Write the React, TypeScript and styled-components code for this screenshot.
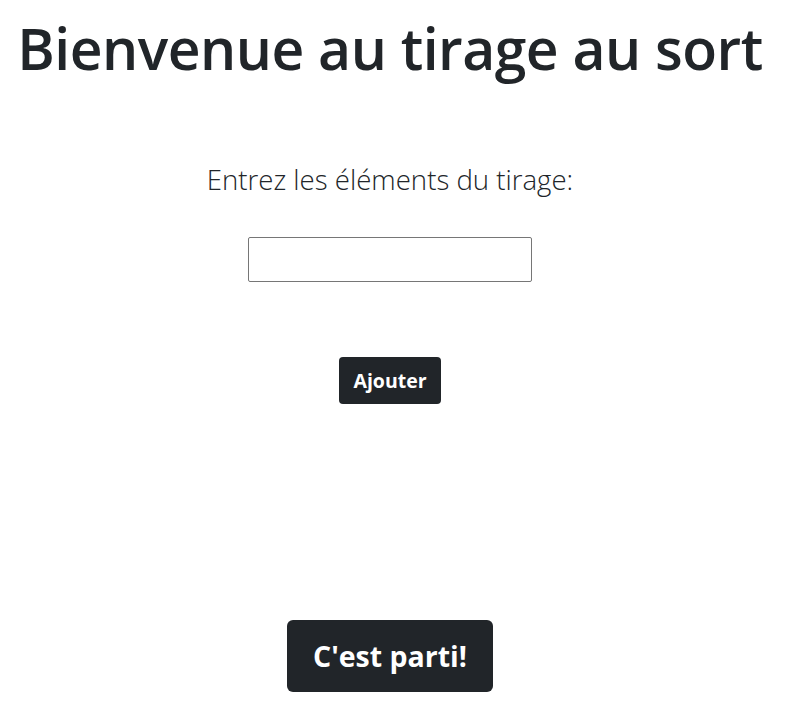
import React from "react";
import styled, { createGlobalStyle } from "styled-components";

const Global = createGlobalStyle`
  html, body { margin: 0; padding: 0; background: #fff; }
  body { font-family: "Open Sans", "Noto Sans", sans-serif; color: #212529; }
  * { box-sizing: border-box; }
`;

const Page = styled.main`
  display: flex;
  flex-direction: column;
  align-items: center;
  text-align: center;
  padding-right: 7px;
`;

const Title = styled.h1`
  margin: 14px 0 0;
  font-size: 57px;
  font-weight: 600;
  line-height: 1.2;
  letter-spacing: -0.5px;
  white-space: nowrap;
`;

const Lead = styled.p`
  margin: 76px 0 0;
  font-size: 27.6px;
  font-weight: 300;
  line-height: 42px;
`;

const Field = styled.input`
  margin-top: 37px;
  width: 284px;
  height: 45px;
  border: 1px solid #767676;
  border-radius: 2px;
  font-size: 16px;
  padding: 0 6px;
  outline: none;
`;

const Button = styled.button<{ $big?: boolean }>`
  background: #212529;
  color: #fff;
  border: none;
  padding: 0;
  font-family: inherit;
  font-weight: 700;
  cursor: pointer;
  border-radius: ${(p) => (p.$big ? "6px" : "4px")};
  font-size: ${(p) => (p.$big ? "28.5px" : "19.5px")};
  width: ${(p) => (p.$big ? "206px" : "102px")};
  height: ${(p) => (p.$big ? "72px" : "47px")};
  margin-top: ${(p) => (p.$big ? "216px" : "75px")};
`;

export default function App() {
  return (
    <>
      <Global />
      <Page>
        <Title>Bienvenue au tirage au sort</Title>
        <Lead>Entrez les éléments du tirage:</Lead>
        <Field type="text" />
        <Button>Ajouter</Button>
        <Button $big>C'est parti!</Button>
      </Page>
    </>
  );
}
